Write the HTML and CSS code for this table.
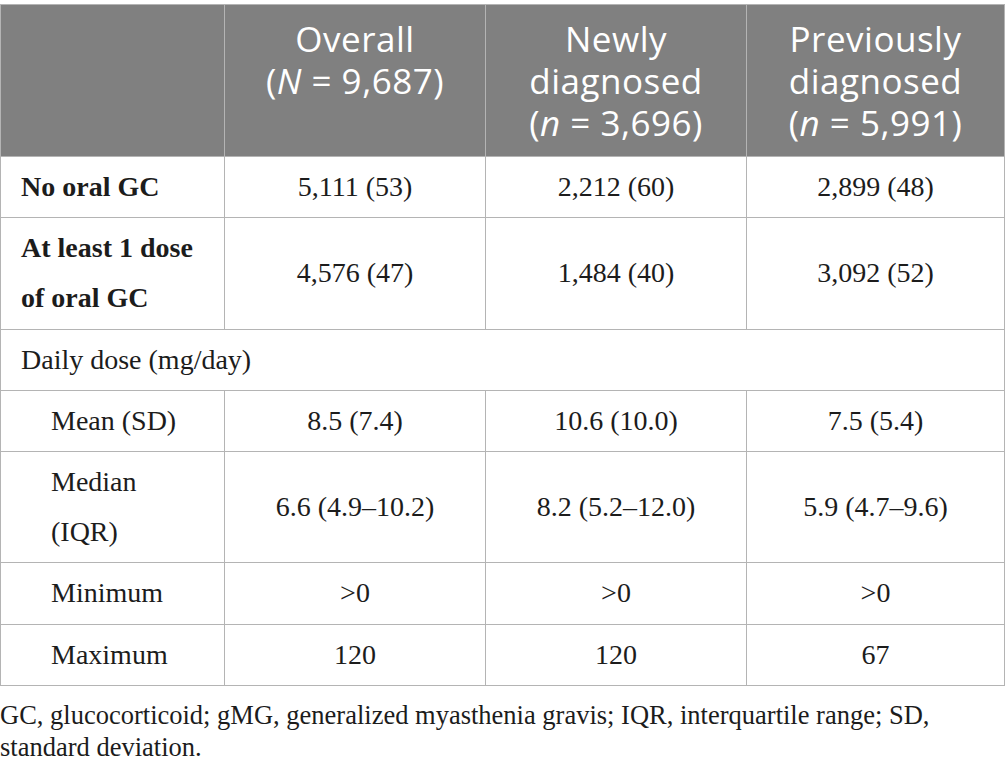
FILE: index.html
```html
<!DOCTYPE html>
<html>
<head>
<meta charset="utf-8">
<link rel="stylesheet" href="styles.css">
</head>
<body>
<table class="data">
  <colgroup>
    <col class="c1"><col class="c2"><col class="c3"><col class="c4">
  </colgroup>
  <thead>
    <tr>
      <th></th>
      <th>Overall<br>(<i>N</i> = 9,687)</th>
      <th>Newly<br>diagnosed<br>(<i>n</i> = 3,696)</th>
      <th>Previously<br>diagnosed<br>(<i>n</i> = 5,991)</th>
    </tr>
  </thead>
  <tbody>
    <tr>
      <td class="lbl"><b>No oral GC</b></td>
      <td>5,111 (53)</td>
      <td>2,212 (60)</td>
      <td>2,899 (48)</td>
    </tr>
    <tr>
      <td class="lbl"><b>At least 1 dose of oral GC</b></td>
      <td>4,576 (47)</td>
      <td>1,484 (40)</td>
      <td>3,092 (52)</td>
    </tr>
    <tr>
      <td class="lbl" colspan="4">Daily dose (mg/day)</td>
    </tr>
    <tr>
      <td class="lbl sub">Mean (SD)</td>
      <td>8.5 (7.4)</td>
      <td>10.6 (10.0)</td>
      <td>7.5 (5.4)</td>
    </tr>
    <tr>
      <td class="lbl sub">Median (IQR)</td>
      <td>6.6 (4.9–10.2)</td>
      <td>8.2 (5.2–12.0)</td>
      <td>5.9 (4.7–9.6)</td>
    </tr>
    <tr>
      <td class="lbl sub">Minimum</td>
      <td>&gt;0</td>
      <td>&gt;0</td>
      <td>&gt;0</td>
    </tr>
    <tr>
      <td class="lbl sub">Maximum</td>
      <td>120</td>
      <td>120</td>
      <td>67</td>
    </tr>
  </tbody>
</table>
<p class="note">GC, glucocorticoid; gMG, generalized myasthenia gravis; IQR, interquartile range; SD, standard deviation.</p>
</body>
</html>
```

FILE: styles.css
```css
html, body {
  margin: 0;
  padding: 0;
  background: #ffffff;
}
body {
  padding-top: 4px;
  font-family: "Liberation Serif", "Times New Roman", serif;
  color: #1c1c1c;
}
.data {
  border-collapse: collapse;
  table-layout: fixed;
  width: 1004px;
}
.c1 { width: 224px; }
.c2 { width: 261px; }
.c3 { width: 261px; }
.c4 { width: 258px; }
.data th, .data td {
  border: 1px solid #b4b4b4;
}
.data th {
  background: #808080;
  color: #ffffff;
  font-family: "Open Sans", "Noto Sans", sans-serif;
  font-weight: 400;
  font-size: 35px;
  line-height: 42px;
  letter-spacing: 0.5px;
  vertical-align: top;
  text-align: center;
  padding: 13px 8px 12px;
}
.data td {
  font-size: 28px;
  line-height: 50.2px;
  padding: 5px 10px;
  text-align: center;
  vertical-align: middle;
}
.data td.lbl {
  text-align: left;
  padding-left: 20px;
  padding-right: 28px;
}
.data td.sub {
  padding-left: 50px;
}
.note {
  margin: 13px 0 0;
  font-size: 26.5px;
  line-height: 32px;
  color: #1c1c1c;
}
```
